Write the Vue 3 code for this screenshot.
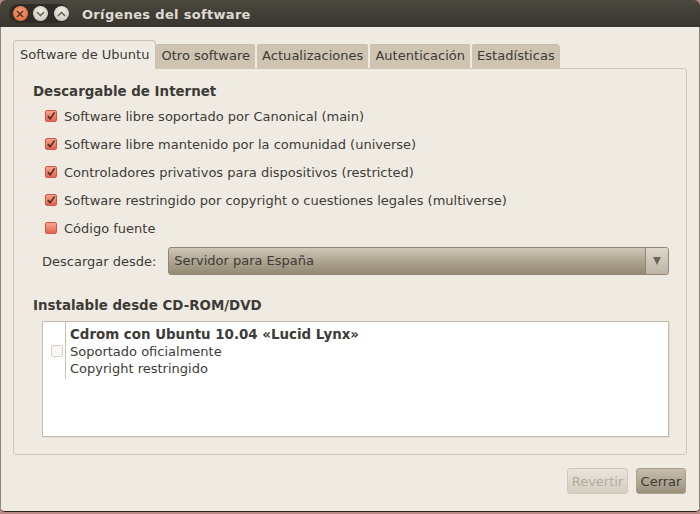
<script setup>
const sources = [
  { label: 'Software libre soportado por Canonical (main)', on: true },
  { label: 'Software libre mantenido por la comunidad (universe)', on: true },
  { label: 'Controladores privativos para dispositivos (restricted)', on: true },
  { label: 'Software restringido por copyright o cuestiones legales (multiverse)', on: true },
  { label: 'Código fuente', on: false },
]
const tabs = ['Otro software', 'Actualizaciones', 'Autenticación', 'Estadísticas']
</script>

<template>
  <div class="desktop">
    <div class="window">
      <header class="titlebar">
        <div class="controls">
          <span class="ctl close">
            <svg width="8" height="8" viewBox="0 0 8 8"><path d="M1 1l6 6M7 1L1 7" stroke="#5a2a1a" stroke-width="1.5"/></svg>
          </span>
          <span class="ctl">
            <svg width="9" height="6" viewBox="0 0 9 6"><path d="M1 1l3.5 3.5L8 1" fill="none" stroke="#6d675c" stroke-width="1.6"/></svg>
          </span>
          <span class="ctl">
            <svg width="9" height="6" viewBox="0 0 9 6"><path d="M1 5l3.5-3.5L8 5" fill="none" stroke="#6d675c" stroke-width="1.6"/></svg>
          </span>
        </div>
        <span class="title">Orígenes del software</span>
      </header>

      <main class="content">
        <nav class="tabs">
          <div class="tab active">Software de Ubuntu</div>
          <div v-for="t in tabs" :key="t" class="tab">{{ t }}</div>
        </nav>

        <section class="panel">
          <h2 class="heading">Descargable de Internet</h2>
          <ul class="checks">
            <li v-for="s in sources" :key="s.label" class="check-row">
              <span class="check">
                <svg v-if="s.on" width="10" height="10" viewBox="0 0 11 11"><path d="M2 5.5l2.6 3L9.5 1.5" fill="none" stroke="#4a2a22" stroke-width="1.7"/></svg>
              </span>
              {{ s.label }}
            </li>
          </ul>

          <div class="download">
            <span>Descargar desde:</span>
            <div class="combo">
              <span class="combo-text">Servidor para España</span>
              <span class="combo-arrow"><svg width="8" height="8" viewBox="0 0 9 9"><path d="M0 0h9L4.5 9z" fill="#6a6558"/></svg></span>
            </div>
          </div>

          <h2 class="heading second">Instalable desde CD-ROM/DVD</h2>
          <div class="list">
            <div class="list-row">
              <div class="list-check"><span class="empty-check"></span></div>
              <div class="list-text">
                <strong>Cdrom con Ubuntu 10.04 «Lucid Lynx»</strong>
                <span>Soportado oficialmente</span>
                <span>Copyright restringido</span>
              </div>
            </div>
          </div>
        </section>

        <footer class="actions">
          <button class="btn disabled">Revertir</button>
          <button class="btn">Cerrar</button>
        </footer>
      </main>
    </div>
  </div>
</template>

<style>
html, body { margin: 0; background: #1c0f0c; }
</style>

<style scoped>
.desktop {
  width: 700px;
  height: 514px;
  overflow: hidden;
  background: #b98a86;
  font-family: "DejaVu Sans", sans-serif;
  font-size: 13px;
  color: #3c3b37;
}
.window {
  height: 511px;
  display: flex;
  flex-direction: column;
  border-radius: 6px 6px 5px 5px;
  overflow: hidden;
  border-bottom: 1px solid #2e2319;
  box-sizing: content-box;
}
.titlebar {
  height: 27px;
  flex: none;
  display: flex;
  align-items: center;
  padding-left: 9px;
  background: linear-gradient(#4b4840, #38352e);
  color: #dfdbd2;
}
.controls {
  display: flex;
  gap: 5.5px;
  align-items: center;
  box-sizing: border-box;
  width: 60px;
  height: 19px;
  padding: 0 0 0 3px;
  border-radius: 10px;
  margin-right: 13px;
  background: #2f2c27;
  flex: none;
}
.ctl {
  width: 15px;
  height: 15px;
  border-radius: 50%;
  background: radial-gradient(circle at 50% 35%, #f2efe8, #c2bdb0);
  display: flex;
  align-items: center;
  justify-content: center;
}
.ctl.close {
  margin-left: 0.5px;
  background: radial-gradient(circle at 50% 40%, #f4a57d, #de5a2a);
}
.title {
  font-weight: 700;
  font-size: 13px;
  letter-spacing: 0.32px;
  padding-top: 1px;
}
.content {
  flex: 1;
  display: flex;
  flex-direction: column;
  padding: 13px 12px 0;
  background: #f0ebe2;
  border-left: 1px solid #8a8678;
  border-right: 1px solid #8a8678;
  margin: 0;
  min-height: 0;
}
.tabs {
  display: flex;
  height: 29px;
  flex: none;
  align-items: flex-end;
  position: relative;
  z-index: 1;
  margin-bottom: -1px;
}
.tab {
  height: 25px;
  line-height: 22px;
  padding: 0 5px;
  margin-right: 2px;
  background: #cfc4b0;
  border-top: 1px solid #c9bea9;
  box-sizing: border-box;
  border-radius: 2px 2px 0 0;
  white-space: nowrap;
  letter-spacing: 0.03px;
}
.tab:last-child { margin-right: 0; border-top-right-radius: 4px; }
.tab.active {
  height: 29px;
  line-height: 27px;
  padding: 0 6px;
  background: #f0ebe2;
  border: 1px solid #c9c3b5;
  border-bottom: none;
  border-radius: 4px 4px 0 0;
  margin-right: 0;
  letter-spacing: 0;
}
.panel {
  height: 387px;
  flex: none;
  box-sizing: border-box;
  border: 1px solid #cdc7b9;
  border-radius: 0 3px 3px 3px;
  padding: 14px 17px 0 19px;
  display: flex;
  flex-direction: column;
}
.heading {
  margin: 0;
  font-size: 13.4px;
  font-weight: 700;
  line-height: 17px;
}
.second { margin-top: 22px; }
.checks {
  list-style: none;
  margin: 2px 0 0;
  padding: 0 0 0 12px;
}
.check-row {
  height: 28px;
  display: flex;
  align-items: center;
  gap: 7px;
  white-space: nowrap;
}
.check {
  width: 12px;
  height: 12px;
  box-sizing: border-box;
  border-radius: 2px;
  border: 1px solid #d0584a;
  background: linear-gradient(#f7a58f, #e4634c);
  display: flex;
  align-items: center;
  justify-content: center;
  flex: none;
}
.download {
  display: flex;
  align-items: center;
  height: 28px;
  margin-top: 5px;
  padding-left: 9px;
  gap: 12px;
  white-space: nowrap;
}
.combo {
  flex: 1;
  height: 28px;
  box-sizing: border-box;
  display: flex;
  border: 1px solid #8f8675;
  border-radius: 3px;
  background: linear-gradient(#cfc7b8, #aba18d 55%, #948a76);
}
.combo-text {
  flex: 1;
  line-height: 25px;
  padding-left: 5px;
}
.combo-arrow {
  width: 22px;
  border-left: 1px solid #8f8675;
  display: flex;
  align-items: center;
  justify-content: center;
  background: linear-gradient(#ded7ca, #bdb4a3);
  border-radius: 0 2px 2px 0;
}
.list {
  height: 116px;
  margin: 7px 0 0 9px;
  box-sizing: border-box;
  background: #fff;
  border: 1px solid #c4bcab;
  box-shadow: 1px 1px 0 #e4dfd3;
}
.list-row {
  display: flex;
  height: 57px;
}
.list-check {
  width: 23px;
  flex: none;
  display: flex;
  align-items: center;
  justify-content: center;
  padding-left: 5px;
  border-right: 1px solid #c9c3b5;
  box-sizing: border-box;
}
.empty-check {
  width: 10px;
  height: 10px;
  border: 1px solid #d5d1c7;
  border-radius: 2px;
  background: #f9f8f5;
}
.list-text {
  display: flex;
  flex-direction: column;
  padding-left: 4px;
  line-height: 17px;
  white-space: nowrap;
  padding-top: 4px;
}
.list-text strong { font-size: 13.4px; }
.actions {
  flex: 1;
  display: flex;
  justify-content: flex-end;
  gap: 8px;
  padding-top: 13px;
  padding-right: 1px;
}
.btn {
  height: 26px;
  box-sizing: border-box;
  padding: 0;
  width: 50px;
  font: inherit;
  color: #3c3b37;
  border: 1px solid #a89f8c;
  border-radius: 3px;
  background: linear-gradient(#c6bdac, #9b917d);
}
.btn.disabled {
  width: 61px;
  color: #b3ab9d;
  border-color: #cfc9bb;
  background: linear-gradient(#e9e4da, #d5cec1);
}
</style>
